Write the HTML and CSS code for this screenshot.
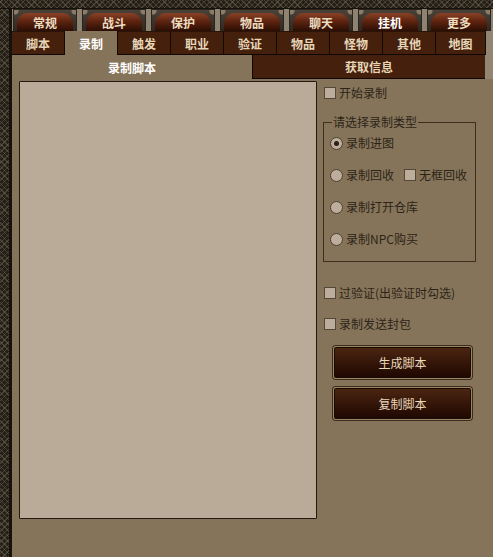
FILE: index.html
```html
<!DOCTYPE html>
<html lang="zh">
<head>
<meta charset="utf-8">
<title>录制</title>
<link rel="stylesheet" href="styles.css">
</head>
<body>
<div class="window">
  <div class="top-edge"></div>
  <div class="left-edge"></div>
  <div class="main">
    <nav class="tabs1">
      <div class="tab1"><span class="dome">常规</span></div>
      <div class="tab1"><span class="dome">战斗</span></div>
      <div class="tab1"><span class="dome">保护</span></div>
      <div class="tab1"><span class="dome">物品</span></div>
      <div class="tab1"><span class="dome">聊天</span></div>
      <div class="tab1 active"><span class="dome">挂机</span></div>
      <div class="tab1"><span class="dome">更多</span></div>
    </nav>
    <nav class="tabs2">
      <div class="tab2">脚本</div>
      <div class="tab2 active">录制</div>
      <div class="tab2">触发</div>
      <div class="tab2">职业</div>
      <div class="tab2">验证</div>
      <div class="tab2">物品</div>
      <div class="tab2">怪物</div>
      <div class="tab2">其他</div>
      <div class="tab2">地图</div>
    </nav>
    <nav class="tabs3">
      <div class="tab3 active">录制脚本</div>
      <div class="tab3">获取信息</div>
    </nav>
    <div class="content">
      <div class="record-area"></div>
      <div class="side">
        <label class="row start"><span class="box"></span>开始录制</label>
        <fieldset class="group">
          <legend>请选择录制类型</legend>
          <div class="row"><span class="radio checked"></span>录制进图</div>
          <div class="row"><span class="radio"></span>录制回收<span class="box nf"></span>无框回收</div>
          <div class="row"><span class="radio"></span>录制打开仓库</div>
          <div class="row"><span class="radio"></span>录制NPC购买</div>
        </fieldset>
        <label class="row verify"><span class="box"></span>过验证(出验证时勾选)</label>
        <label class="row packet"><span class="box"></span>录制发送封包</label>
        <button class="btn first">生成脚本</button>
        <button class="btn second">复制脚本</button>
      </div>
    </div>
  </div>
</div>
</body>
</html>
```
FILE: styles.css
```css
* { box-sizing: border-box; }
html, body { margin: 0; padding: 0; }
body {
  width: 493px;
  height: 557px;
  overflow: hidden;
  background: #86745a;
  font-family: "Noto Sans CJK SC", "Noto Sans", sans-serif;
  font-size: 12px;
  color: #2c2418;
}
.window {
  display: grid;
  grid-template-columns: 12px 1fr;
  grid-template-rows: 9px 1fr;
  width: 493px;
  height: 557px;
}
.top-edge {
  grid-column: 1 / -1;
  background:
    repeating-linear-gradient(45deg, rgba(110,100,80,0.5) 0 1px, transparent 1px 4px),
    repeating-linear-gradient(-45deg, rgba(110,100,80,0.5) 0 1px, transparent 1px 4px),
    #241f17;
  border-bottom: 1px solid #15110b;
}
.left-edge {
  background:
    repeating-linear-gradient(45deg, rgba(110,100,80,0.5) 0 1px, transparent 1px 4px),
    repeating-linear-gradient(-45deg, rgba(110,100,80,0.5) 0 1px, transparent 1px 4px),
    #241f17;
  border-right: 3px solid #17120b;
}
.main {
  display: flex;
  flex-direction: column;
  min-width: 0;
}
/* top tabs */
.tabs1 {
  display: grid;
  grid-template-columns: repeat(7, 64px);
  column-gap: 5px;
  padding-left: 1px;
  height: 22px;
  background: #8e8270;
}
.tab1 {
  display: flex;
  padding: 3px 3px 0 3px;
  background:
    radial-gradient(circle at 1px 1px, #8a7c66 0 3px, transparent 4px),
    radial-gradient(circle at calc(100% - 1px) 1px, #8a7c66 0 3px, transparent 4px),
    linear-gradient(#4a4238, #2e2822);
  border: 1px solid #2a241c;
  border-bottom: none;
}
.dome {
  flex: 1;
  display: flex;
  align-items: center;
  justify-content: center;
  border-radius: 11px 11px 0 0;
  background: linear-gradient(#8a4226 0%, #5e2410 45%, #2c0e04 100%);
  color: #ecdcc0;
  font-weight: bold;
  font-size: 12px;
  line-height: 1;
  padding-top: 1px;
}
.tab1.active .dome { color: #ffffff; }
/* second tabs */
.tabs2 {
  display: grid;
  grid-template-columns: repeat(8, 53px) 50px;
  height: 24px;
  background: #928571;
}
.tab2 {
  display: flex;
  align-items: center;
  justify-content: center;
  background: #45200c;
  color: #e6d6b8;
  font-weight: bold;
  border-right: 1px solid #140a04;
  border-bottom: 1px solid #0e0703;
  border-top: 1px solid #2a1408;
}
.tab2.active {
  background: #86745a;
  color: #ffffff;
  border-bottom: none;
  border-top: none;
}
/* third tabs */
.tabs3 {
  display: grid;
  grid-template-columns: 240px 233px;
  height: 24px;
  background: #928571;
}
.tab3 {
  display: flex;
  align-items: center;
  justify-content: center;
  background: #45200c;
  color: #e6d6b8;
  font-weight: bold;
  border-left: 1px solid #0e0703;
  border-bottom: 1px solid #0e0703;
}
.tab3.active {
  background: #86745a;
  color: #ffffff;
  border: none;
}
/* content */
.content {
  display: flex;
  gap: 6px;
  padding: 2px 0 0 7px;
}
.record-area {
  width: 298px;
  height: 438px;
  background: #b9ab98;
  border: 1px solid #221910;
  border-radius: 1px;
  flex: none;
}
.side {
  display: flex;
  flex-direction: column;
  align-items: flex-start;
  width: 165px;
}
.row {
  display: flex;
  align-items: center;
  height: 14px;
  line-height: 14px;
  white-space: nowrap;
  color: #2c2418;
}
.box {
  width: 12px;
  height: 12px;
  flex: none;
  background: #bcae9a;
  border: 1px solid #54483a;
  margin-right: 3px;
}
.radio {
  width: 13px;
  height: 13px;
  flex: none;
  border-radius: 50%;
  background: #bcae9a;
  border: 1px solid #4a4030;
  margin-right: 3px;
  position: relative;
}
.radio.checked::after {
  content: "";
  position: absolute;
  left: 3px;
  top: 3px;
  width: 5px;
  height: 5px;
  border-radius: 50%;
  background: #2a2018;
}
.start { margin: 5px 0 0 1px; }
.group {
  margin: 15px 0 0 0;
  width: 153px;
  padding: 0 0 15px 6px;
  border: 1px solid #3a3020;
  display: flex;
  flex-direction: column;
  gap: 18px;
}
.group legend {
  margin-left: 2px;
  padding: 0 1px;
  line-height: 14px;
  height: 14px;
  color: #2c2418;
}
.group .row:first-of-type { margin-top: 7px; }
.group .nf { margin-left: 10px; }
.verify { margin: 24px 0 0 1px; }
.packet { margin: 17px 0 0 1px; }
.btn {
  width: 139px;
  height: 33px;
  margin-left: 10px;
  border: 1px solid #9a8462;
  border-radius: 3px;
  box-shadow: 0 0 0 1px #3a2c1c, inset 0 0 0 1px #1a0a02;
  background: linear-gradient(#4c2612 0%, #2e1106 65%, #1e0802 100%);
  color: #e8d8bc;
  font-family: "Noto Sans CJK SC", "Noto Sans", sans-serif;
  font-size: 12px;
  padding: 0;
}
.btn.first { margin-top: 15px; }
.btn.second { margin-top: 8px; }
```
